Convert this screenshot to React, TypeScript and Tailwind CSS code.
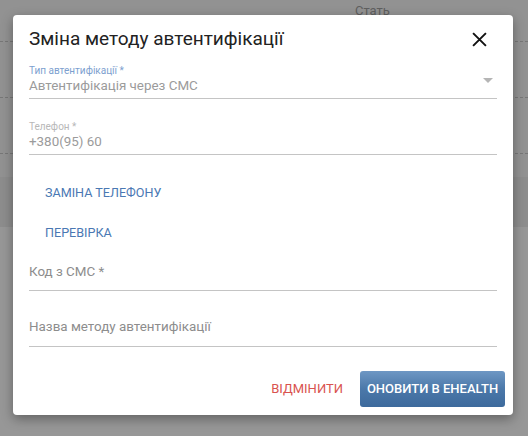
import React from "react";

const font = { fontFamily: '"Roboto", "Liberation Sans", sans-serif' };

function Field({
  label,
  value,
  labelClass,
  mt,
  arrow,
}: {
  label: string;
  value: string;
  labelClass: string;
  mt: string;
  arrow?: boolean;
}) {
  return (
    <div className={`${mt} relative border-b border-[#c4c4c4] pb-[3px]`}>
      <div className={`text-[10px] leading-[12px] ${labelClass}`}>{label}</div>
      <div className="text-[13.4px] leading-[18px] text-[#9b9b9b]">{value}</div>
      {arrow && (
        <div className="absolute right-[4px] top-[13px] w-0 h-0 border-l-[5px] border-r-[5px] border-t-[5px] border-l-transparent border-r-transparent border-t-[#b5b5b5]" />
      )}
    </div>
  );
}

export default function App() {
  return (
    <div className="relative w-[528px] h-[436px] overflow-hidden bg-[#979797]" style={font}>
      {/* table behind the overlay */}
      <div className="bg-[#929292]">
        <div className="h-[42px] border-b border-dashed border-[#777] pl-[355px] pt-[4px] text-[13px] leading-[14px] text-[#5f5f5f]">
          Стать
        </div>
        <div className="h-[56px] border-b border-dashed border-[#777]" />
        <div className="h-[56px] border-b border-dashed border-[#777]" />
        <div className="h-[23px]" />
      </div>
      <div className="h-[50px] bg-[#8d8d8d]" />

      {/* dialog */}
      <div className="absolute left-[13px] top-[15px] w-[500px] h-[400px] bg-white rounded-[4px] shadow-[0_4px_12px_rgba(0,0,0,0.35)] px-4">
        <div className="mt-[10px] h-[28px] flex items-center justify-between">
          <h2 className="text-[19px] leading-[28px] text-[#222]">Зміна методу автентифікації</h2>
          <svg width="15" height="15" viewBox="0 0 14 14" className="mr-[10px]">
            <path d="M1 1 L13 13 M13 1 L1 13" stroke="#111" strokeWidth="1.8" />
          </svg>
        </div>

        <Field
          mt="mt-[12px]"
          label="Тип автентифікації *"
          value="Автентифікація через СМС"
          labelClass="text-[#7d9fcf]"
          arrow
        />
        <Field mt="mt-[22px]" label="Телефон *" value="+380(95) 60" labelClass="text-[#b8b8b8]" />

        <div className="mt-[30px] pl-4 text-[12.6px] leading-[16px] text-[#4a78b3] uppercase">
          Заміна телефону
        </div>
        <div className="mt-[24px] pl-4 text-[12.6px] leading-[16px] text-[#4a78b3] uppercase">
          Перевірка
        </div>

        <div className="mt-[22px] border-b border-[#c4c4c4] pb-[9px] text-[13.4px] leading-[18px] text-[#8d8d8d]">
          Код з СМС *
        </div>
        <div className="mt-[27px] border-b border-[#c4c4c4] pb-[10px] text-[13.4px] leading-[18px] text-[#8d8d8d]">
          Назва методу автентифікації
        </div>

        <div className="mt-[24px] -mr-2 flex items-center justify-end gap-[17px]">
          <button className="text-[13px] text-[#d9534f] uppercase">Відмінити</button>
          <button className="h-[36px] w-[145px] rounded-[3px] bg-gradient-to-b from-[#6e97c4] via-[#4b78a9] to-[#3d6a9c] text-white text-[13px] font-medium uppercase">
            Оновити в eHealth
          </button>
        </div>
      </div>
    </div>
  );
}
